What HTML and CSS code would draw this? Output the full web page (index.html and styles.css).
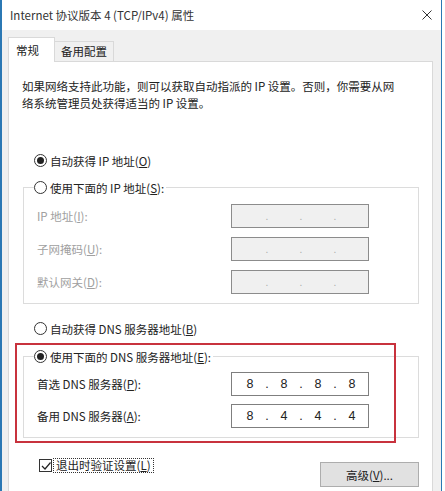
FILE: index.html
```html
<!DOCTYPE html>
<html lang="zh-CN">
<head>
  <meta charset="UTF-8">
  <title>Internet 协议版本 4 (TCP/IPv4) 属性</title>
  <link rel="stylesheet" href="styles.css">
</head>
<body>
  <div class="window">
    <div class="titlebar">
      <span>Internet 协议版本 4 (TCP/IPv4) 属性</span>
      <svg class="close" width="10" height="10" viewBox="0 0 10 10">
        <path d="M0.5 0.5 L9.5 9.5 M9.5 0.5 L0.5 9.5" stroke="#333" stroke-width="1" fill="none"/>
      </svg>
    </div>

    <div class="dialog">
      <div class="tabs">
        <div class="tab active">常规</div>
        <div class="tab">备用配置</div>
      </div>

      <div class="panel">
        <p class="intro">如果网络支持此功能，则可以获取自动指派的 IP 设置。否则，你需要从网<br>络系统管理员处获得适当的 IP 设置。</p>

        <div class="radio-row first">
          <span class="radio on"></span>
          <span>自动获得 IP 地址(<u>O</u>)</span>
        </div>

        <fieldset class="group">
          <legend class="radio-row">
            <span class="radio"></span>
            <span>使用下面的 IP 地址(<u>S</u>):</span>
          </legend>
          <div class="field disabled">
            <span class="label">IP 地址(<u>I</u>):</span>
            <div class="ipbox">
              <span></span><i>.</i><span></span><i>.</i><span></span><i>.</i><span></span>
            </div>
          </div>
          <div class="field disabled">
            <span class="label">子网掩码(<u>U</u>):</span>
            <div class="ipbox">
              <span></span><i>.</i><span></span><i>.</i><span></span><i>.</i><span></span>
            </div>
          </div>
          <div class="field disabled">
            <span class="label">默认网关(<u>D</u>):</span>
            <div class="ipbox">
              <span></span><i>.</i><span></span><i>.</i><span></span><i>.</i><span></span>
            </div>
          </div>
        </fieldset>

        <div class="radio-row dns-auto">
          <span class="radio"></span>
          <span>自动获得 DNS 服务器地址(<u>B</u>)</span>
        </div>

        <div class="dns-wrap">
          <fieldset class="group dns">
            <legend class="radio-row">
              <span class="radio on"></span>
              <span>使用下面的 DNS 服务器地址(<u>E</u>):</span>
            </legend>
            <div class="field">
              <span class="label">首选 DNS 服务器(<u>P</u>):</span>
              <div class="ipbox">
                <span>8</span><i>.</i><span>8</span><i>.</i><span>8</span><i>.</i><span>8</span>
              </div>
            </div>
            <div class="field">
              <span class="label">备用 DNS 服务器(<u>A</u>):</span>
              <div class="ipbox">
                <span>8</span><i>.</i><span>4</span><i>.</i><span>4</span><i>.</i><span>4</span>
              </div>
            </div>
          </fieldset>
          <div class="highlight"></div>
        </div>

        <div class="actions">
          <div class="check-row">
            <span class="checkbox">
              <svg width="10" height="10" viewBox="0 0 10 10">
                <path d="M1 5 L4 8 L9.5 1.5" stroke="#222" stroke-width="1.2" fill="none"/>
              </svg>
            </span>
            <span class="focus">退出时验证设置(<u>L</u>)</span>
          </div>
          <button class="btn">高级(<u>V</u>)...</button>
        </div>
      </div>
    </div>
  </div>
</body>
</html>
```

FILE: styles.css
```css
* {
  box-sizing: border-box;
}

body {
  margin: 0;
  background: #fff;
  font-family: "Noto Sans CJK SC", "Noto Sans", sans-serif;
  font-size: 11.5px;
  color: #222;
}

.window {
  width: 442px;
  height: 491px;
  border-left: 2px solid #2b78b4;
  border-right: 1px solid #2b78b4;
  background: #f0f0f0;
  overflow: hidden;
}

.titlebar {
  height: 30px;
  background: #fff;
  display: flex;
  justify-content: space-between;
  align-items: center;
  padding: 0 9px 0 8px;
  font-size: 11.5px;
  color: #333;
}

.dialog {
  padding: 7px 8px 0 6px;
}

.tabs {
  display: flex;
  align-items: flex-end;
  height: 24px;
}

.tab {
  height: 20px;
  padding: 0 6px;
  line-height: 19px;
  border: 1px solid #d9d9d9;
  border-left: none;
  border-bottom: none;
  background: #f0f0f0;
}

.tab.active {
  position: relative;
  width: 47px;
  height: 25px;
  margin-bottom: -1px;
  padding-left: 7px;
  line-height: 24px;
  border-left: 1px solid #d9d9d9;
  background: #fff;
}

.panel {
  height: 440px;
  background: #fff;
  border: 1px solid #d9d9d9;
  padding: 16px 13px 0;
}

.intro {
  margin: 0;
  line-height: 17px;
  white-space: nowrap;
}

.radio-row {
  display: flex;
  align-items: center;
  gap: 3px;
  height: 17px;
  white-space: nowrap;
}

.radio-row.first {
  margin: 40px 0 0 12px;
}

.radio-row.dns-auto {
  margin: 16px 0 0 12px;
}

.radio {
  width: 13px;
  height: 13px;
  border: 1px solid #333;
  border-radius: 50%;
  background: #fff;
  display: flex;
  align-items: center;
  justify-content: center;
}

.radio.on::after {
  content: "";
  width: 7px;
  height: 7px;
  border-radius: 50%;
  background: #222;
}

.group {
  margin: 10px 0 0 1px;
  padding: 8px 0 9px 10px;
  border: 1px solid #dcdcdc;
  min-width: 0;
}

.group legend {
  padding: 0 2px 0 0;
}

.field {
  display: flex;
  align-items: center;
  height: 24px;
  padding-left: 3px;
}

.field + .field {
  margin-top: 9px;
}

.field .label {
  width: 194px;
  white-space: nowrap;
}

.field.disabled .label {
  color: #a0a0a0;
}

.ipbox {
  width: 138px;
  height: 24px;
  border: 1px solid #7f7f7f;
  background: #fff;
  padding-left: 4px;
  display: grid;
  grid-template-columns: 28px 6px 28px 6px 28px 6px 28px;
  align-items: center;
  font-family: "Liberation Sans", sans-serif;
  font-size: 12.5px;
  color: #222;
}

.ipbox span,
.ipbox i {
  text-align: center;
  font-style: normal;
}

.field.disabled .ipbox {
  background: #f0f0f0;
  border-color: #8c8c8c;
  color: #aaa;
  font-size: 10px;
}

.dns-wrap {
  position: relative;
  margin-top: 11px;
}

.group.dns {
  margin-top: 0;
  padding: 7px 0 9px 10px;
}

.group.dns .field + .field {
  margin-top: 8px;
}

.highlight {
  position: absolute;
  top: -5px;
  left: -7px;
  width: 381px;
  height: 100px;
  border: 2px solid #c8323d;
  pointer-events: none;
}

.actions {
  display: flex;
  justify-content: space-between;
  align-items: flex-start;
  margin-top: 19px;
}

.check-row {
  display: flex;
  align-items: center;
  margin: 1px 0 0 17px;
}

.checkbox {
  width: 13px;
  height: 13px;
  border: 1px solid #333;
  background: #fff;
  display: flex;
  align-items: center;
  justify-content: center;
}

.focus {
  margin-left: 1px;
  padding: 0 2px;
  height: 15px;
  line-height: 13px;
  border: 1px dotted #333;
  white-space: nowrap;
}

.btn {
  margin-top: 5px;
  width: 99px;
  height: 25px;
  background: #e1e1e1;
  border: 1px solid #adadad;
  font-family: inherit;
  font-size: 11.5px;
  color: #222;
  padding: 0;
}
```
